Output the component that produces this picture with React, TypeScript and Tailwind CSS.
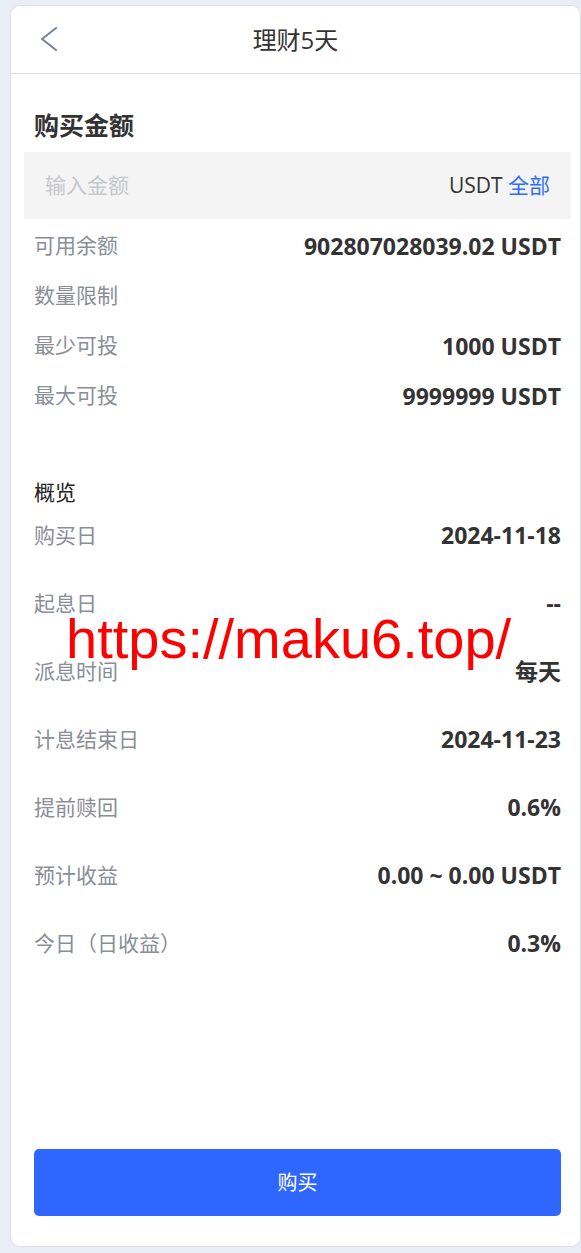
const rowsTop = [
  { label: '可用余额', value: '902807028039.02 USDT' },
  { label: '数量限制', value: '' },
  { label: '最少可投', value: '1000 USDT' },
  { label: '最大可投', value: '9999999 USDT' },
];

const overview = [
  { label: '购买日', value: '2024-11-18' },
  { label: '起息日', value: '--' },
  { label: '派息时间', value: '每天' },
  { label: '计息结束日', value: '2024-11-23' },
  { label: '提前赎回', value: '0.6%' },
  { label: '预计收益', value: '0.00 ~ 0.00 USDT' },
  { label: '今日（日收益）', value: '0.3%' },
];

const font = 'font-["Open_Sans","Noto_Sans_CJK_SC",sans-serif]';

export default function App() {
  return (
    <div className={`min-h-[1253px] bg-[#e9eef6] pl-[10px] pt-[5px] pb-[6px] ${font}`}>
      <div className="relative flex h-[1242px] flex-col rounded-[10px] border border-[#dedfe2] bg-white">
        {/* header */}
        <div className="relative flex h-[68px] items-center justify-center border-b border-[#dcdcdc]">
          <svg
            className="absolute left-[29px] top-[20px]"
            width="18"
            height="26"
            viewBox="0 0 18 26"
            fill="none"
          >
            <polyline
              points="16,2 2,13 16,24"
              stroke="#7b8699"
              strokeWidth="2.2"
              strokeLinecap="round"
              strokeLinejoin="round"
            />
          </svg>
          <span className="text-[24px] text-[#333]">理财5天</span>
        </div>

        {/* amount */}
        <div className="pl-[23px] pr-[19px] pt-[33px] pb-[9px] text-[25px] font-bold leading-[36px] text-[#333]">
          购买金额
        </div>
        <div className="ml-[13px] mr-[9px] flex h-[67px] items-center justify-between bg-[#f4f4f4] pl-[21px] pr-[21px]">
          <span className="text-[21px] text-[#c4c7cc]">输入金额</span>
          <span className="text-[21px] text-[#333]">
            USDT <span className="text-[#2f6bff]">全部</span>
          </span>
        </div>

        <div className="flex flex-col pl-[23px] pr-[19px] pt-[2px]">
          {rowsTop.map((r) => (
            <div key={r.label} className="flex h-[50px] items-center justify-between">
              <span className="text-[21px] text-[#898e97]">{r.label}</span>
              <span className="text-[23px] font-bold text-[#333]">{r.value}</span>
            </div>
          ))}

          <div className="mt-[56px] text-[21px] leading-[30px] text-[#222]">概览</div>

          <div className="mt-[13px] flex flex-col">
            {overview.map((r) => (
              <div key={r.label} className="flex h-[68px] items-start justify-between">
                <span className="text-[21px] leading-[30px] text-[#898e97]">{r.label}</span>
                <span className="text-[23px] font-bold leading-[30px] text-[#333]">{r.value}</span>
              </div>
            ))}
          </div>
        </div>

        <div className="mt-auto pb-[30px] pl-[23px] pr-[19px]">
          <button
            type="button"
            className="flex h-[67px] w-full items-center justify-center rounded-[5px] bg-[#2e66ff] text-[20px] text-white"
          >
            购买
          </button>
        </div>

        {/* watermark */}
        <div className='pointer-events-none absolute left-[55px] top-[605px] font-["Liberation_Sans",sans-serif] text-[56px] leading-none text-[#ff0000]'>
          https://maku6.top/
        </div>
      </div>
    </div>
  );
}
